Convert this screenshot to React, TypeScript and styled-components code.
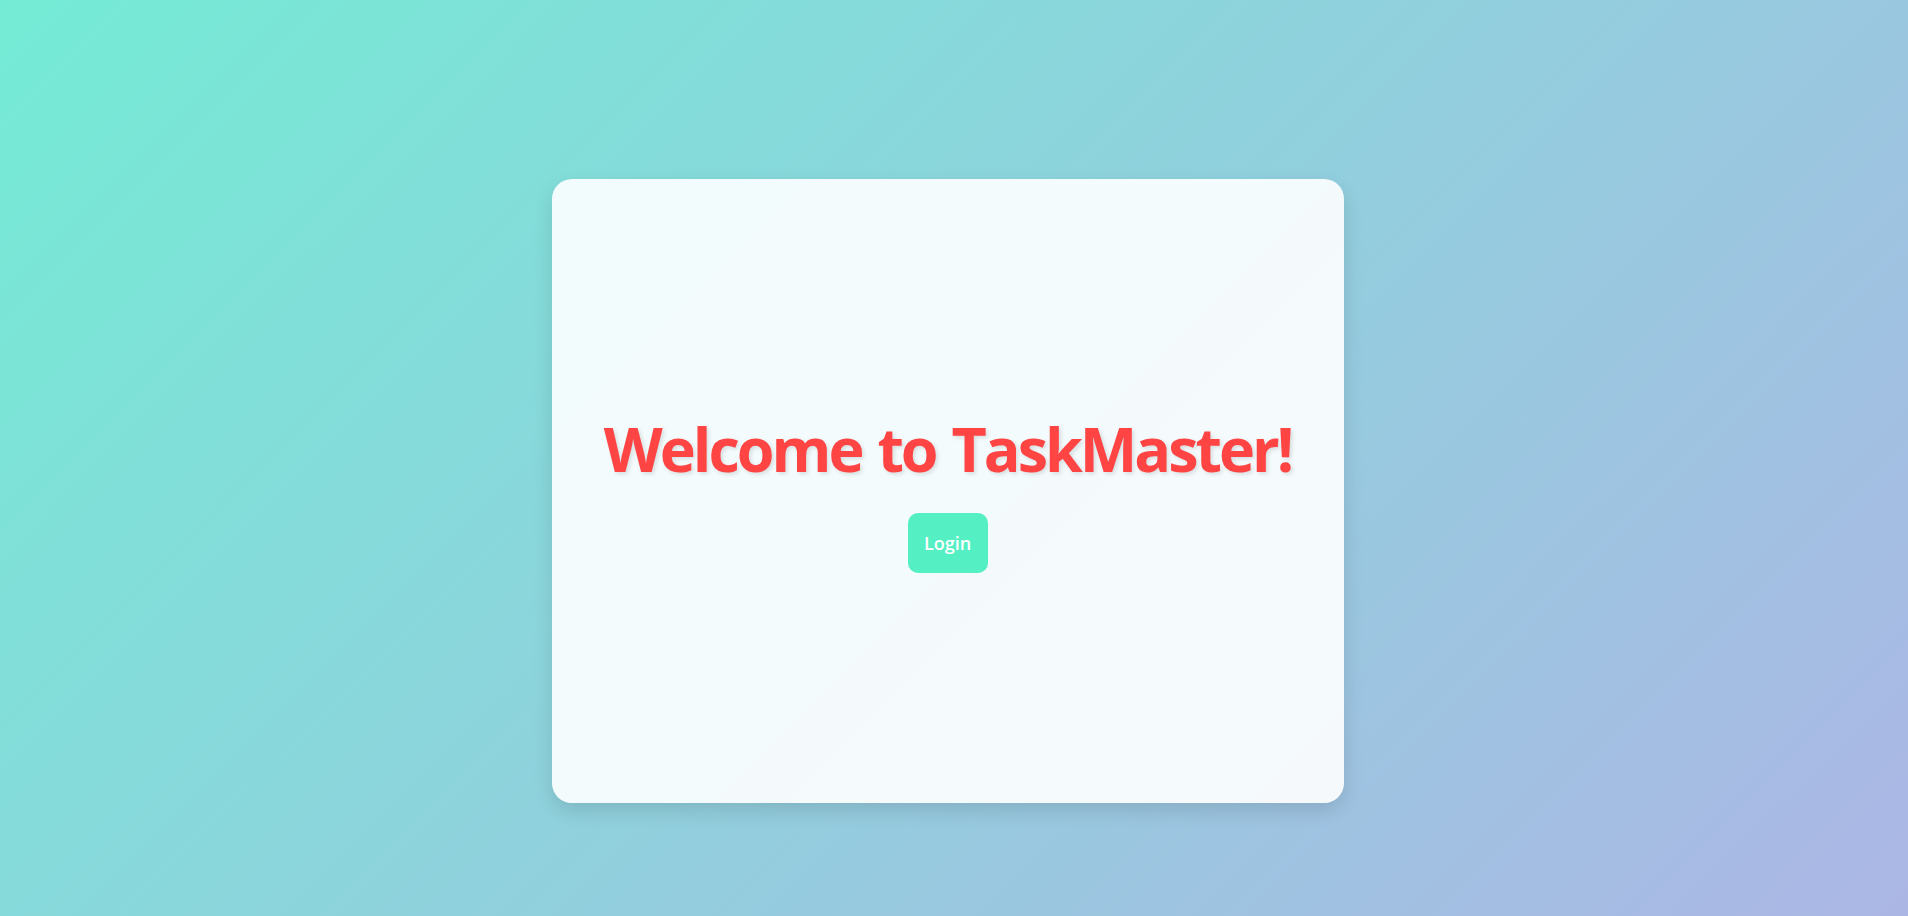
import React from "react";
import styled, { createGlobalStyle } from "styled-components";

const GlobalStyle = createGlobalStyle`
  html, body {
    margin: 0;
    padding: 0;
    height: 100%;
  }
  body {
    font-family: "Open Sans", "Noto Sans", "Liberation Sans", sans-serif;
    background: linear-gradient(135deg, #74ebd5 0%, #acb6e5 100%);
    min-height: 100vh;
  }
  #root {
    min-height: 100vh;
  }
`;

const Page = styled.main`
  box-sizing: border-box;
  min-height: 100vh;
  display: flex;
  justify-content: center;
  align-items: flex-start;
  padding: 179px 13px 0 0;
`;

const Card = styled.section`
  box-sizing: border-box;
  width: 792px;
  height: 624px;
  background: rgba(255, 255, 255, 0.9);
  border-radius: 20px;
  box-shadow: 0 8px 20px rgba(0, 0, 0, 0.12);
  display: flex;
  flex-direction: column;
  align-items: center;
  justify-content: center;
  padding: 40px;
`;

const Title = styled.h1`
  margin: 0;
  font-size: 61px;
  font-weight: 700;
  line-height: 1.3;
  color: #ff4444;
  text-shadow: 2px 2px 4px rgba(0, 0, 0, 0.12);
  letter-spacing: -3px;
  word-spacing: 3px;
  white-space: nowrap;
`;

const LoginButton = styled.button`
  margin-top: 24px;
  width: 80px;
  height: 60px;
  border: none;
  border-radius: 10px;
  background: #55efc4;
  color: #ffffff;
  font-family: "Open Sans", "Noto Sans", sans-serif;
  font-size: 18px;
  font-weight: 600;
  cursor: pointer;
  padding: 0;
`;

export default function App() {
  return (
    <>
      <GlobalStyle />
      <Page>
        <Card>
          <Title>Welcome to TaskMaster!</Title>
          <LoginButton>Login</LoginButton>
        </Card>
      </Page>
    </>
  );
}
